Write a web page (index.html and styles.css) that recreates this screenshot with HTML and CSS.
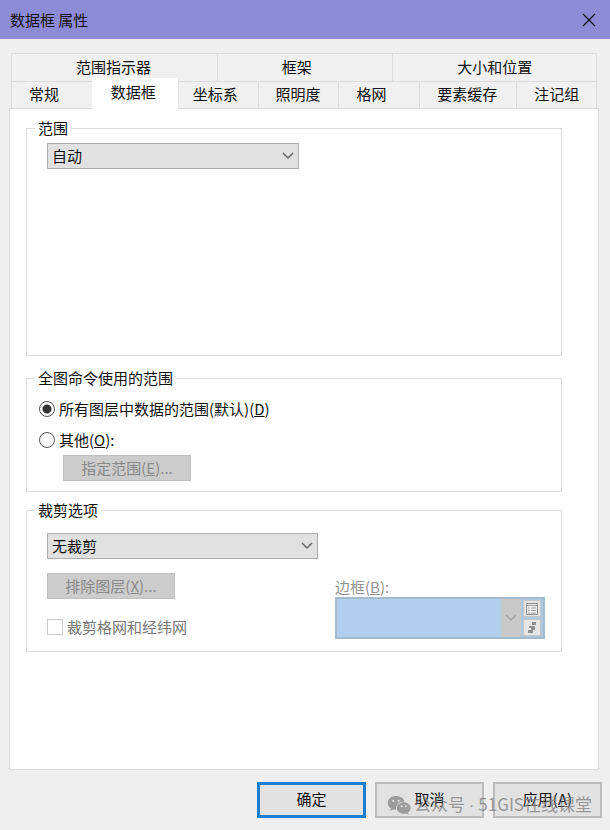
FILE: index.html
```html
<!DOCTYPE html>
<html lang="zh-CN">
<head>
<meta charset="utf-8">
<meta name="viewport" content="width=device-width, initial-scale=1">
<title>数据框 属性</title>
<link rel="stylesheet" href="styles.css">
</head>
<body>
<header class="titlebar">
  <h1 class="title">数据框 属性</h1>
  <button class="close" type="button" aria-label="关闭">
    <svg width="14" height="14" viewBox="0 0 14 14" fill="none" stroke="#111" stroke-width="1.2"><path d="M1 1l12 12M13 1L1 13"/></svg>
  </button>
</header>

<main class="content">
  <div class="tabs" role="tablist">
    <div class="tab-row tab-row-back">
      <button class="tab" type="button" role="tab">范围指示器</button>
      <button class="tab" type="button" role="tab">框架</button>
      <button class="tab" type="button" role="tab">大小和位置</button>
    </div>
    <div class="tab-row tab-row-front">
      <button class="tab" type="button" role="tab">常规</button>
      <button class="tab tab-active" type="button" role="tab" aria-selected="true">数据框</button>
      <button class="tab" type="button" role="tab">坐标系</button>
      <button class="tab" type="button" role="tab">照明度</button>
      <button class="tab" type="button" role="tab">格网</button>
      <button class="tab" type="button" role="tab">要素缓存</button>
      <button class="tab" type="button" role="tab">注记组</button>
    </div>
  </div>

  <form class="panel">
    <fieldset class="group group-extent">
      <legend>范围</legend>
      <div class="combo combo-extent">
        <select aria-label="范围"><option>自动</option></select>
        <svg class="chevron" width="12" height="8" viewBox="0 0 12 8"><path d="M1 1l5 5 5-5"/></svg>
      </div>
    </fieldset>

    <fieldset class="group group-full">
      <legend>全图命令使用的范围</legend>
      <label class="option"><input type="radio" name="full" checked><span>所有图层中数据的范围(默认)(<u>D</u>)</span></label>
      <label class="option"><input type="radio" name="full"><span>其他(<u>O</u>):</span></label>
      <button class="small-button specify" type="button" disabled>指定范围(<u>E</u>)...</button>
    </fieldset>

    <fieldset class="group group-clip">
      <legend>裁剪选项</legend>
      <div class="combo combo-clip">
        <select aria-label="裁剪选项"><option>无裁剪</option></select>
        <svg class="chevron" width="12" height="8" viewBox="0 0 12 8"><path d="M1 1l5 5 5-5"/></svg>
      </div>
      <div class="clip-row">
        <div class="clip-left">
          <button class="small-button" type="button" disabled>排除图层(<u>X</u>)...</button>
          <label class="option option-disabled"><input type="checkbox" disabled><span>裁剪格网和经纬网</span></label>
        </div>
        <div class="border-field">
          <label for="border">边框(<u>B</u>):</label>
          <div class="border-box">
            <select id="border" disabled><option></option></select>
            <span class="border-arrow"><svg class="chevron-light" width="12" height="8" viewBox="0 0 12 8"><path d="M1 1l5 5 5-5"/></svg></span>
            <div class="border-tools">
              <button type="button" aria-label="选择样式" disabled>
                <svg width="14" height="14" viewBox="0 0 14 14" fill="none" stroke="#a0a0a0"><path d="M1.500 1.500h11v11h-11z" fill="#f0f0f0" stroke="#8d8d8d"/><path d="M2 3.500h10M3 6h2M3 8.500h2M3 11h2M6 6h5M6 8.500h5M6 11h5"/></svg>
              </button>
              <button type="button" aria-label="样式属性" disabled>
                <svg width="14" height="14" viewBox="0 0 14 14" fill="#8f8f8f"><path d="M7 1h4v3H7zM4 5h6v4H8v3H3V9h3V7H4z"/></svg>
              </button>
            </div>
          </div>
        </div>
      </div>
    </fieldset>
  </form>
</main>

<footer class="footer">
  <button class="button button-default" type="button">确定</button>
  <button class="button" type="button">取消</button>
  <button class="button" type="button">应用(<u>A</u>)</button>
  <div class="watermark">
    <svg width="24" height="20" viewBox="0 0 24 20">
      <path fill="#8b8b8b" d="M9 1C4 1 0.8 4 0.8 8c0 2.200 1.100 4 3 5.300L3 16l3-1.600c1 .3 2 .4 3.200.4C8.500 10 12 6.500 17.500 6.500 16.600 3.300 13.300 1 9 1z"/>
      <path fill="#8b8b8b" d="M16.800 7.300c-4 0-7 2.500-7 5.700s3 5.700 7 5.700c.9 0 1.700-.1 2.500-.3l2.400 1.300-.6-2.200c1.500-1.100 2.500-2.700 2.500-4.500 0-3.200-2.900-5.700-6.800-5.700z"/>
      <g fill="#e8e8e8"><circle cx="6.300" cy="5.800" r="1.100"/><circle cx="11.500" cy="5.800" r="1.100"/><circle cx="14.600" cy="11.200" r="1"/><circle cx="19" cy="11.200" r="1"/></g>
    </svg>
    <span>公众号 <span class="dot">·</span> 51GIS在线课堂</span>
  </div>
</footer>
</body>
</html>
```
FILE: styles.css
```css
* {
  box-sizing: border-box;
}

body {
  margin: 0;
  min-height: 100vh;
  display: flex;
  flex-direction: column;
  background: #efefef;
  color: #111;
  font: 15px/20px "Noto Sans CJK SC", sans-serif;
}

button,
select,
input {
  font: inherit;
  color: inherit;
  margin: 0;
}

u {
  text-underline-offset: 1px;
}

.titlebar {
  display: flex;
  align-items: center;
  justify-content: space-between;
  height: 39px;
  padding: 0 10px;
  background: #8e8bd6;
}

.title {
  margin: 0;
  font-size: 15px;
  font-weight: 400;
}

.close {
  display: flex;
  padding: 4px;
  border: 0;
  background: none;
}

.content {
  flex: 1;
  display: flex;
  flex-direction: column;
  padding: 14px 11px 0 9px;
}

.tabs {
  margin: 0 2px;
  border: 1px solid #dcdcdc;
  border-bottom: 0;
}

.tab-row {
  display: grid;
}

.tab-row-back {
  grid-template-columns: 206fr 176fr 203fr;
}

.tab-row-front {
  grid-template-columns: 81fr 83fr 83fr 81fr 81fr 97fr 79fr;
  border-top: 1px solid #dcdcdc;
}

.tab {
  height: 27px;
  padding: 0 0 2px 17px;
  border: 0;
  border-right: 1px solid #dcdcdc;
  background: #f0f0f0;
  text-align: left;
  white-space: nowrap;
}

.tab-row-front .tab {
  height: 26px;
}

.tab:last-child {
  border-right: 0;
}

.tab-row-back .tab {
  padding-left: 64px;
}

.tab-row-front .tab-active {
  z-index: 1;
  height: 31px;
  margin: -4px -3px -1px -1px;
  padding-left: 19px;
  padding-bottom: 3px;
  border-color: #e4e4e4;
  background: #fff;
}

.panel {
  flex: 1;
  padding: 9px 36px 16px 16px;
  border: 1px solid #dcdcdc;
  background: #fff;
}

.group {
  min-width: 0;
  margin: 0;
  padding: 5px 16px 0 20px;
  border: 1px solid #dcdcdc;
}

.group legend {
  margin-left: -12px;
  padding: 0 3px;
}

.group-extent {
  min-height: 238px;
  margin-bottom: 12px;
}

.group-full {
  padding-left: 12px;
  padding-bottom: 10px;
  margin-bottom: 8px;
}

.group-full legend {
  margin-left: -4px;
}

.group-clip {
  padding-top: 13px;
  padding-bottom: 12px;
}

.combo {
  position: relative;
  height: 26px;
}

.combo-extent {
  max-width: 252px;
}

.combo-clip {
  max-width: 271px;
}

.combo select {
  appearance: none;
  width: 100%;
  height: 100%;
  padding: 0 24px 0 4px;
  border: 1px solid #adadad;
  border-radius: 0;
  background: #e1e1e1;
}

.chevron {
  position: absolute;
  right: 5px;
  top: 9px;
}

.chevron,
.chevron-light {
  fill: none;
  stroke: #666;
  stroke-width: 1.5;
}

.chevron-light {
  stroke: #a4a4a4;
}

.option {
  display: flex;
  align-items: center;
  gap: 4px;
  width: fit-content;
}

.group-full .option {
  height: 31px;
}

.option input {
  appearance: none;
  width: 16px;
  height: 16px;
  border: 1px solid #555;
  background: #fff;
}

.option input[type="radio"] {
  border-radius: 50%;
}

.option input[type="radio"]:checked {
  background: radial-gradient(circle, #333 0 4px, #fff 5px);
}

.option-disabled {
  color: #777;
}

.option-disabled input {
  border-color: #c8c8c8;
}

.small-button {
  display: block;
  width: 128px;
  height: 26px;
  padding: 0;
  border: 1px solid #c1c1c1;
  background: #ccc;
  color: #8a8a8a;
}

.specify {
  margin-left: 24px;
}

.clip-row {
  display: flex;
  justify-content: space-between;
  margin-top: 14px;
}

.clip-left {
  display: flex;
  flex-direction: column;
  gap: 18px;
}

.border-field {
  width: 210px;
  padding-top: 4px;
  color: #949494;
}

.border-field label {
  display: block;
}

.border-box {
  display: flex;
  height: 42px;
  border: 2px solid #a5bacf;
  background: #aec8e2;
}

.border-box select {
  appearance: none;
  flex: 1;
  min-width: 0;
  border: 0;
  border-radius: 0;
  background: #b3cfee;
  opacity: 1;
}

.border-arrow {
  display: flex;
  align-items: center;
  justify-content: center;
  width: 20px;
  background: #c9c9c9;
}

.border-tools {
  display: flex;
  flex-direction: column;
  justify-content: space-between;
  padding: 1px 2px;
}

.border-tools button {
  display: flex;
  align-items: center;
  justify-content: center;
  width: 18px;
  height: 17px;
  padding: 0;
  border: 1px solid #c5c5c5;
  background: #e6e6e6;
}

.footer {
  position: relative;
  display: flex;
  justify-content: flex-end;
  gap: 9px;
  padding: 12px 8px;
}

.button {
  width: 109px;
  height: 36px;
  padding: 0 0 2px;
  border: 2px solid #bcbcbc;
  background: #e2e2e2;
}

.button-default {
  border: 3px solid #1a7fd0;
}

.watermark {
  position: absolute;
  right: 18px;
  bottom: 14px;
  display: flex;
  align-items: center;
  gap: 3px;
  color: #858585;
  font-size: 17px;
  white-space: nowrap;
  opacity: 0.8;
  pointer-events: none;
}

.dot {
  font-family: "Liberation Sans", sans-serif;
}
```
